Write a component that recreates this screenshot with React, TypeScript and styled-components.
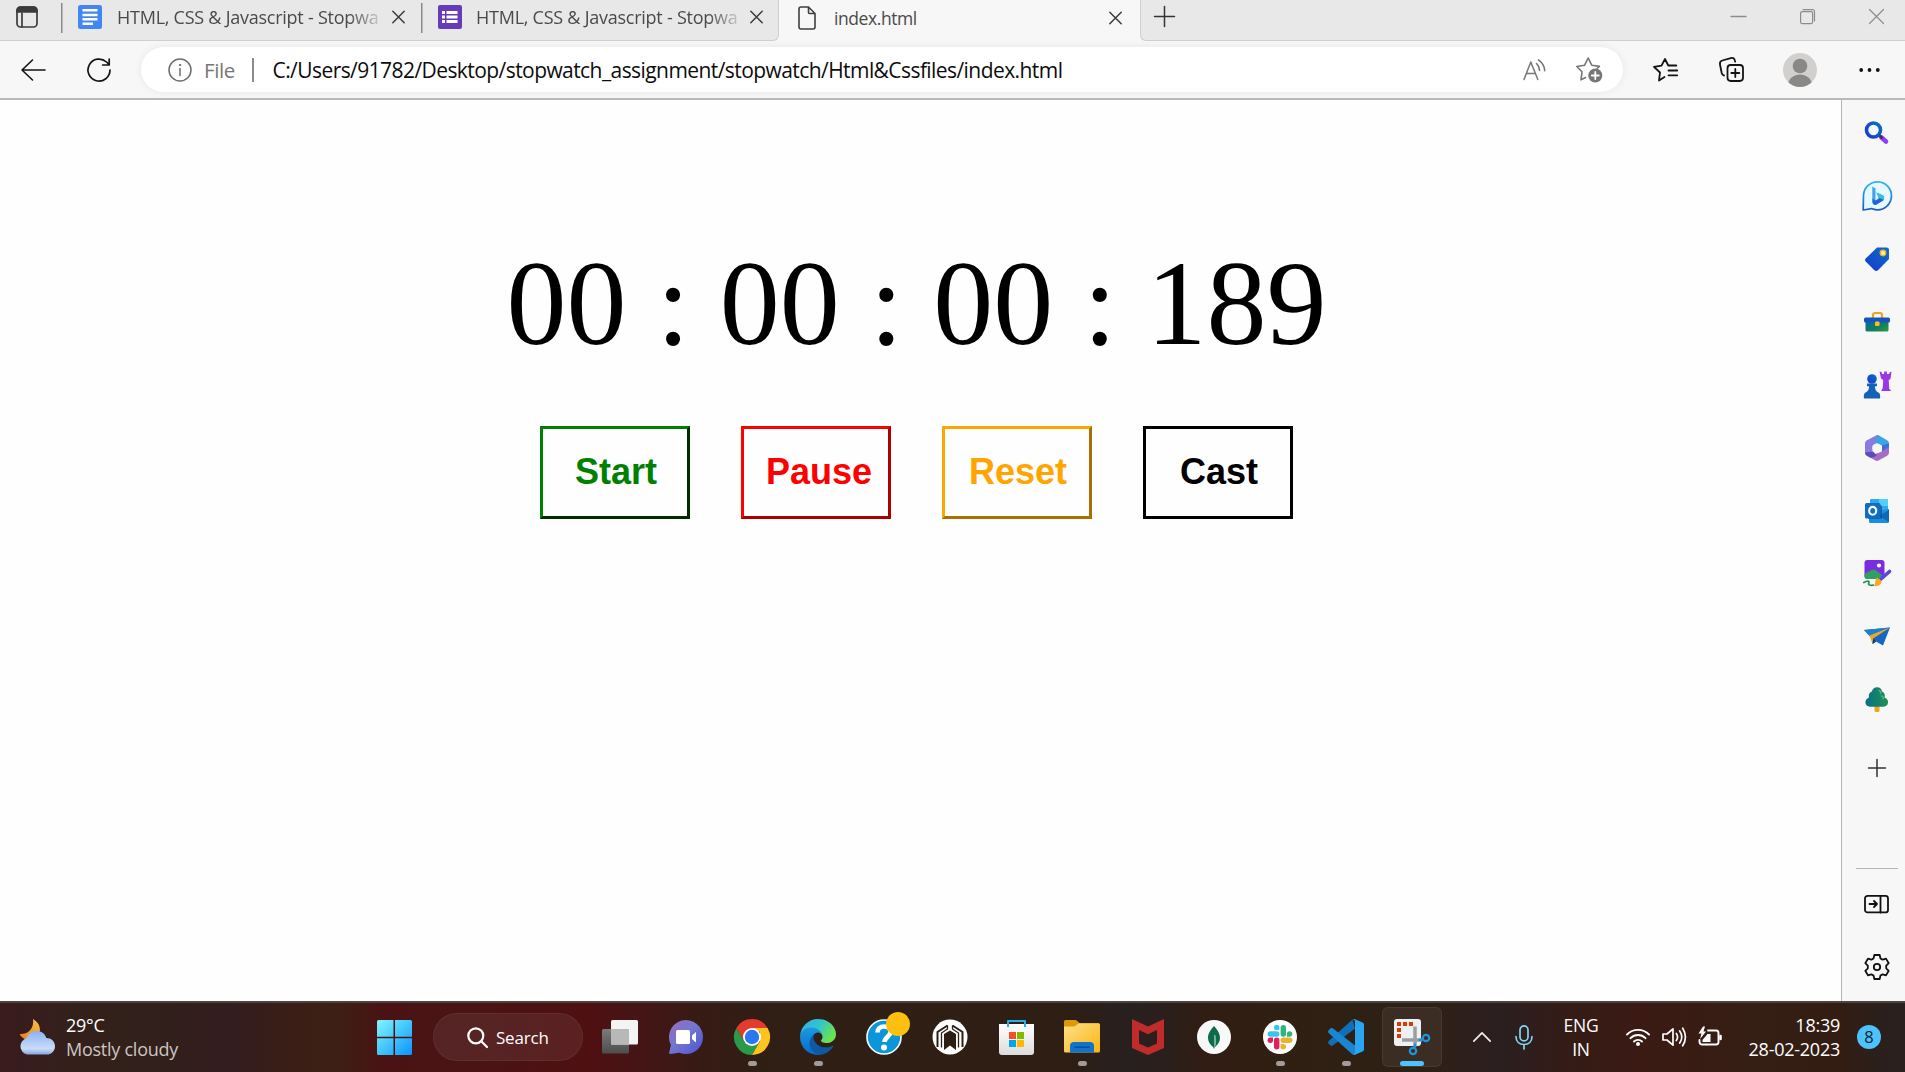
import React from 'react';
import styled, { createGlobalStyle } from 'styled-components';

const GlobalStyle = createGlobalStyle`
  * { box-sizing: border-box; }
  body { margin: 0; overflow: hidden; background: #f7f7f7; }
  svg { display: block; flex: none; overflow: visible; }
`;

const UI_FONT = '"Open Sans", "Noto Sans", sans-serif';

const Screen = styled.div`
  width: 1905px;
  height: 1072px;
  display: flex;
  flex-direction: column;
  overflow: hidden;
  font-family: ${UI_FONT};
`;

/* ---------- tab strip ---------- */

const TabStrip = styled.div`
  height: 41px;
  flex: none;
  display: flex;
  background: #f7f7f7;
`;

const InactiveTabs = styled.div`
  width: 779px;
  display: flex;
  background: #e8e8e8;
  border: solid #cfcfcf;
  border-width: 0 1px 1px 0;
  border-bottom-right-radius: 6px;
`;

const TabMenu = styled.div`
  width: 61px;
  padding: 6px 0 0 16px;
`;

const Tab = styled.div<{ $width: number; $pad: number }>`
  width: ${p => p.$width}px;
  padding: 0 ${p => p.$pad}px 6px 17px;
  display: flex;
  align-items: center;
`;

const DividedTab = styled(Tab)`
  background: linear-gradient(#8a8a8a, #8a8a8a) 0 3px / 1.5px 30px no-repeat;
`;

const ActiveTab = styled(Tab)`
  padding-left: 19px;
  background: #f7f7f7;
`;

const TabTitle = styled.span<{ $fade?: boolean; $gap: number }>`
  flex: 1;
  margin-left: ${p => p.$gap}px;
  white-space: nowrap;
  font-size: ${p => (p.$fade ? 18 : 17.5)}px;
  line-height: 28px;
  letter-spacing: ${p => (p.$fade ? -0.25 : -0.42)}px;
  color: #4a4a4a;
  ${p => p.$fade && 'mask-image: linear-gradient(90deg, #000 232px, rgba(0, 0, 0, 0.2) 262px);'}
`;

const StripRest = styled.div`
  flex: 1;
  display: flex;
  justify-content: space-between;
  background: #e8e8e8;
  border: solid #cfcfcf;
  border-width: 0 0 1px 1px;
  border-bottom-left-radius: 6px;
  padding: 6px 21px 0 13px;
`;

const WindowControls = styled.div`
  display: flex;
  gap: 54px;
  padding-top: 3px;
`;

/* ---------- toolbar ---------- */

const Toolbar = styled.div`
  height: 59px;
  flex: none;
  display: flex;
  align-items: center;
  border-bottom: 2px solid #b9b9b9;
  background: #f7f7f7;
`;

const ToolCell = styled.div<{ $width: number }>`
  width: ${p => p.$width}px;
  flex: none;
  display: flex;
  justify-content: center;
`;

const AddressBar = styled.div`
  width: 1482px;
  height: 45px;
  border-radius: 23px;
  background: #fff;
  box-shadow: 0 0 9px rgba(0, 0, 0, 0.07);
  display: flex;
  align-items: center;
  padding: 0 20px 0 27px;
`;

const Scheme = styled.span`
  width: 48px;
  padding-left: 12px;
  font-size: 20.5px;
  letter-spacing: -0.4px;
  color: #767676;
`;

const AddressDivider = styled.span`
  width: 1.5px;
  height: 24px;
  margin: 0 19px 0 12px;
  background: #8a8a8a;
`;

const Url = styled.span`
  flex: 1;
  font-size: 21px;
  letter-spacing: -0.57px;
  white-space: nowrap;
  color: #0c0c0c;
`;

const AddressActions = styled.div`
  display: flex;
  align-items: center;
  gap: 30px;
`;

/* ---------- page ---------- */

const Middle = styled.div`
  flex: 1;
  min-height: 0;
  display: flex;
`;

const Page = styled.main`
  width: 1842px;
  border-right: 1px solid #b5b5b5;
  background: #fefefe;
  display: flex;
  flex-direction: column;
  align-items: center;
  padding: 144px 8px 0 0;
`;

const Clock = styled.div`
  font: 120px/120px "Liberation Serif", "Times New Roman", serif;
  white-space: pre;
  color: #000;
`;

const ButtonRow = styled.div`
  display: flex;
  gap: 51px;
  margin: 62px 0 0 0;
`;

const ActionButton = styled.button<{ $color: string; $flat?: boolean }>`
  width: 150px;
  height: 93px;
  padding: 0 20px 1px 22px;
  border: 3px ${p => (p.$flat ? 'solid' : 'outset')} ${p => p.$color};
  background: #fefefe;
  color: ${p => p.$color};
  font: bold 36px "Liberation Sans", Arial, sans-serif;
  white-space: nowrap;
`;

const Sidebar = styled.aside`
  flex: 1;
  display: flex;
  flex-direction: column;
  align-items: center;
  background: #f7f7f7;
  padding: 1px 0 0 6px;
`;

const SideCell = styled.div<{ $height?: number }>`
  height: ${p => p.$height ?? 63}px;
  flex: none;
  display: flex;
  align-items: center;
`;

const SideRule = styled.div`
  width: 42px;
  height: 1px;
  margin: 64px 0 3px 0;
  background: #b5b5b5;
`;

/* ---------- taskbar ---------- */

const Taskbar = styled.footer`
  height: 71px;
  flex: none;
  display: flex;
  align-items: center;
  border-top: 2px solid #4b4442;
  padding-bottom: 1px;
  color: #fff;
  background: linear-gradient(90deg,
    #3a1b1e 0, #34201b 70px, #31201b 150px, #331d1e 230px, #3b1e16 300px, #3d1f14 340px,
    #4a1214 385px, #4a1414 460px, #4f1012 590px, #451516 640px, #371b15 700px, #2f1f14 770px,
    #2e1e13 1060px, #282020 1130px, #2a1f1c 1160px, #311d13 1210px, #2f2013 1320px,
    #2f2017 1440px, #2b1f20 1500px, #351c16 1570px, #3b1a14 1640px, #351f14 1760px,
    #331d13 1840px, #2a201e 1890px, #2a201e 100%);
`;

const Weather = styled.div`
  width: 377px;
  display: flex;
  align-items: center;
  gap: 11px;
  padding-left: 19px;
`;

const Lines = styled.div<{ $align?: string; $width?: number; $size?: number }>`
  width: ${p => (p.$width ? p.$width + 'px' : 'auto')};
  font-size: ${p => p.$size ?? 18}px;
  line-height: 24px;
  letter-spacing: -0.25px;
  text-align: ${p => p.$align ?? 'left'};
  white-space: nowrap;
  padding-bottom: 1px;
`;

const Muted = styled.div`
  color: #cdc5c2;
`;

const SearchPill = styled.div`
  width: 150px;
  height: 48px;
  margin: 0 4px 0 21px;
  border-radius: 24px;
  background: rgba(255, 255, 255, 0.07);
  border: 1px solid rgba(255, 255, 255, 0.05);
  display: flex;
  align-items: center;
  gap: 8px;
  padding-left: 33px;
  font-size: 17px;
  letter-spacing: -0.2px;
`;

const AppCell = styled.div`
  position: relative;
  width: 66px;
  height: 68px;
  display: flex;
  align-items: center;
  justify-content: center;
`;

const ActiveTile = styled.div`
  width: 60px;
  height: 60px;
  border-radius: 6px;
  background: rgba(255, 255, 255, 0.06);
  border: 1px solid rgba(255, 255, 255, 0.06);
  display: flex;
  align-items: center;
  justify-content: center;
`;

const Running = styled.span<{ $active?: boolean }>`
  position: absolute;
  bottom: 5px;
  width: ${p => (p.$active ? 24 : 9)}px;
  height: 5px;
  border-radius: 3px;
  background: ${p => (p.$active ? '#4cc2ff' : '#a39b97')};
`;

const AlertDot = styled.span`
  position: absolute;
  left: 35px;
  top: 9px;
  width: 24px;
  height: 24px;
  border-radius: 50%;
  background: #fdc010;
`;

const Tray = styled.div`
  display: flex;
  align-items: center;
  margin-left: 16px;
`;

const TrayCell = styled.div<{ $width: number }>`
  width: ${p => p.$width}px;
  display: flex;
  justify-content: center;
`;

const CountBadge = styled.div`
  width: 24px;
  height: 24px;
  margin-left: 17px;
  border-radius: 50%;
  background: #4cc2ff;
  color: #10202a;
  font-size: 16.5px;
  line-height: 23px;
  text-align: center;
`;

/* ---------- icons ---------- */

type BoxProps = { w: number; h: number; children: React.ReactNode; stroke?: string; sw?: number };

const Ico = ({ w, h, children, stroke = 'none', sw = 1.6 }: BoxProps) => (
  <svg width={w} height={h} viewBox={`0 0 ${w} ${h}`} fill="none" stroke={stroke} strokeWidth={sw} strokeLinecap="round" strokeLinejoin="round">
    {children}
  </svg>
);

const TabActionsIcon = () => (
  <Ico w={22} h={22} stroke="#3b3b3b" sw={1.7}>
    <rect x="1" y="1" width="20" height="20" rx="3.5" />
    <path d="M1 6V4.500a3.500 3.500 0 0 1 3.500-3.500h13a3.500 3.500 0 0 1 3.500 3.500V6z" fill="#3b3b3b" />
    <path d="M6 7v14" />
  </Ico>
);

const DocsIcon = () => (
  <Ico w={24} h={24}>
    <rect width="24" height="24" rx="2.500" fill="#4285f4" />
    <path d="M4.500 4h15v2.500h-15zM4.500 8.800h15v2.500h-15zM4.500 13h15v2.500h-15zM4.500 17.500h10.500v2.500H4.500z" fill="#fff" />
  </Ico>
);

const FormsIcon = () => (
  <Ico w={24} h={24}>
    <rect width="24" height="24" rx="2" fill="#673ab7" />
    <path d="M4 6h3v3H4zM4 10.500h3v3H4zM4 15h3v3H4zM8.500 6h11v3h-11zM8.500 10.500h11v3h-11zM8.500 15h11v3h-11z" fill="#fff" />
  </Ico>
);

const PageIcon = () => (
  <Ico w={18} h={24} stroke="#3f3f3f" sw={1.6}>
    <path d="M3 1h7.500L17 7.500V21a2 2 0 0 1-2 2H3a2 2 0 0 1-2-2V3a2 2 0 0 1 2-2zM10.500 1v5.500a1 1 0 0 0 1 1H17" />
  </Ico>
);

const CloseIcon = () => (
  <Ico w={13} h={12} stroke="#3c3c3c" sw={1.5}>
    <path d="M.8.300l11.400 11.400M12.200.300L.8 11.700" />
  </Ico>
);

const BackIcon = () => (
  <Ico w={25} h={22} stroke="#141414" sw={1.6}>
    <path d="M24 11H1M11.500 1L1 11l10.500 10" />
  </Ico>
);

const ReloadIcon = () => (
  <Ico w={24} h={24} stroke="#141414" sw={1.7}>
    <path d="M23 12A11 11 0 1 1 19.500 4L22 6.300M22.200 1v6h-6.500" />
  </Ico>
);

const InfoIcon = () => (
  <Ico w={24} h={24} stroke="#6e6e6e" sw={1.5}>
    <circle cx="12" cy="12" r="11" />
    <path d="M12 10.500v7" />
    <circle cx="12" cy="7" r=".7" fill="#6e6e6e" strokeWidth="1" />
  </Ico>
);

const ReadAloudIcon = () => (
  <Ico w={23} h={22} stroke="#767676" sw={1.5}>
    <path d="M1 20.500L7.800 3l7 17.500M3.500 14.500H12.200M13.500 4.500q3 3 3 7M15.500.800q6 4.500 6.200 11" />
  </Ico>
);

const StarAddIcon = () => (
  <Ico w={27} h={26} stroke="#767676" sw={1.6}>
    <path d="M9.500 20.500L5 22.800l1-8L.8 9.500l7.700-1.200L12.200 1l3.500 7.200 7.700 1.200-2.300 2.100" />
    <circle cx="19.300" cy="18.500" r="7" fill="#767676" stroke="none" />
    <path d="M19.300 15v7M15.800 18.500h7" stroke="#fff" strokeWidth="1.800" />
  </Ico>
);

const FavoritesIcon = () => (
  <Ico w={25} h={24} stroke="#141414" sw={1.8}>
    <path d="M11.500 19L6 22.500l1-8L1 8.800l7.500-1.200L12 1l3.300 6.500h8M15.500 12.500h8.700M15.500 17.300h8.700" />
  </Ico>
);

const CollectionsIcon = () => (
  <Ico w={25} h={25} stroke="#141414" sw={1.8}>
    <rect x="8.500" y="8" width="15.500" height="16" rx="3.200" />
    <path d="M16.300 12v8M12.300 16h8M5 18.500c-1.300-.300-2-1.200-2.300-2.500L1 7.500C.600 5.300 1.500 4 3.300 3.500l8.500-2.400c2-.5 3.500.3 4 2.300l.4 1.300" />
  </Ico>
);

const AvatarIcon = () => (
  <Ico w={34} h={34}>
    <clipPath id="avatarClip"><circle cx="17" cy="17" r="17" /></clipPath>
    <g clipPath="url(#avatarClip)">
      <rect width="34" height="34" fill="#d2d0ce" />
      <circle cx="17" cy="13" r="7.300" fill="#8a8886" />
      <path d="M4.500 32c1.500-7 6.500-10.500 12.500-10.500S28 25 29.500 32l-5 4h-15z" fill="#8a8886" />
    </g>
  </Ico>
);

const DotsIcon = () => (
  <Ico w={21} h={4}>
    <circle cx="2.200" cy="2" r="1.900" fill="#141414" />
    <circle cx="10.500" cy="2" r="1.900" fill="#141414" />
    <circle cx="18.800" cy="2" r="1.900" fill="#141414" />
  </Ico>
);

const GradientDefs = styled.svg`
  position: absolute;
`;

const Gradients = () => (
  <GradientDefs width="0" height="0">
    <defs>
      <linearGradient id="blueDeep" x1="0" y1="1" x2="1" y2="0"><stop offset="0" stopColor="#1a37d0" /><stop offset="1" stopColor="#0a6fc2" /></linearGradient>
      <linearGradient id="purple" x1="0" y1="0" x2="1" y2="1"><stop offset="0" stopColor="#6a2be8" /><stop offset="1" stopColor="#b84bf5" /></linearGradient>
      <linearGradient id="bing" x1="0" y1="0" x2="0" y2="1"><stop offset="0" stopColor="#2fb6ef" /><stop offset="1" stopColor="#2059cf" /></linearGradient>
      <linearGradient id="boxBody" x1="0" y1="0" x2="1" y2="1"><stop offset="0" stopColor="#0f63b5" /><stop offset=".6" stopColor="#127f58" /><stop offset="1" stopColor="#2a9b4b" /></linearGradient>
      <linearGradient id="tree" x1="0" y1="0" x2="1" y2="0"><stop offset="0" stopColor="#0a6f8a" /><stop offset="1" stopColor="#1f9150" /></linearGradient>
      <linearGradient id="cloud" x1="0" y1="0" x2="0" y2="1"><stop offset="0" stopColor="#88b2f5" /><stop offset=".75" stopColor="#cbdcf7" /><stop offset="1" stopColor="#86a5de" /></linearGradient>
      <linearGradient id="moon" x1="0" y1="1" x2="1" y2="0"><stop offset="0" stopColor="#f07a1c" /><stop offset="1" stopColor="#f9c440" /></linearGradient>
      <linearGradient id="chat" x1="0" y1="0" x2="1" y2="1"><stop offset="0" stopColor="#9a6cb4" /><stop offset=".45" stopColor="#7477d0" /><stop offset="1" stopColor="#4b54cf" /></linearGradient>
      <linearGradient id="edgeTop" x1="0" y1="0" x2="1" y2=".5"><stop offset="0" stopColor="#2fb0e6" /><stop offset=".5" stopColor="#30c3d0" /><stop offset="1" stopColor="#6be34e" /></linearGradient>
      <linearGradient id="edgeLeft" x1="0" y1="0" x2="0" y2="1"><stop offset="0" stopColor="#1b9de2" /><stop offset="1" stopColor="#0b69c9" /></linearGradient>
      <linearGradient id="folder" x1="0" y1="0" x2="1" y2="1"><stop offset="0" stopColor="#ffe08a" /><stop offset="1" stopColor="#f9b50f" /></linearGradient>
      <linearGradient id="store" x1="0" y1="0" x2="0" y2="1"><stop offset="0" stopColor="#fff" /><stop offset="1" stopColor="#dcdcdc" /></linearGradient>
      <linearGradient id="grayPane" x1="0" y1="0" x2="0" y2="1"><stop offset="0" stopColor="#7b7b7b" /><stop offset="1" stopColor="#4d4d4d" /></linearGradient>
      <linearGradient id="winPane" gradientUnits="userSpaceOnUse" x1="0" y1="0" x2="35" y2="35"><stop offset="0" stopColor="#84f5ff" /><stop offset=".5" stopColor="#44c6fb" /><stop offset="1" stopColor="#0a93ff" /></linearGradient>
    </defs>
  </GradientDefs>
);

const SideSearch = () => (
  <Ico w={26} h={26}>
    <path d="M17.500 17.500l4.500 4" stroke="#8f3df0" strokeWidth="4.600" />
    <path d="M15.500 15.500l2 2" stroke="#4a2a55" strokeWidth="3" />
    <circle cx="9.500" cy="10" r="7" stroke="url(#blueDeep)" strokeWidth="3.600" fill="#f4fbff" />
  </Ico>
);

const SideBing = () => (
  <Ico w={30} h={30}>
    <path d="M1.200 29l.3-15A14 14 0 1 1 15 28.800q-3 0-5.500-1.200z" fill="#e6f9ff" stroke="url(#bing)" strokeWidth="1.700" />
    <path d="M10.300 5.500l3.200 1.800v13l-3.200-2.500z" fill="#3fa5ee" />
    <path d="M14.500 11.500l6.500 3c1.500 1 1.500 4 0 5.300L13.800 24c-2 .5-3.500-1.500-3.500-3.500v-3l3.200 2 3.500-2.200z" fill="#1f63d8" />
    <path d="M14.500 11.500l6.500 3c1.200 1 1.400 3 .5 4.500l-5-2.500z" fill="#35c0ea" />
  </Ico>
);

const SideTag = () => (
  <Ico w={26} h={26}>
    <path d="M13 1.500h9.500a2.500 2.500 0 0 1 2.500 2.500v9L14 24.300q-1.800 1.400-3.600 0L1.700 15.600q-1.300-1.500 0-3z" fill="url(#blueDeep)" />
    <circle cx="19" cy="7" r="2.700" fill="#fff3c0" stroke="#f0b31c" strokeWidth="1.500" />
  </Ico>
);

const SideToolbox = () => (
  <Ico w={26} h={20}>
    <path d="M9 5.500V3A2 2 0 0 1 11 1h5a2 2 0 0 1 2 2V5.500" stroke="#eda51b" strokeWidth="2.200" />
    <rect x="1.500" y="7" width="23" height="12.500" rx="1.500" fill="url(#boxBody)" />
    <rect x="0" y="5.500" width="26" height="5" rx="1.500" fill="#1554bd" />
    <rect x="11" y="9.500" width="4.500" height="4.500" rx="1" fill="#fbbc2c" />
  </Ico>
);

const SideChess = () => (
  <Ico w={28} h={28}>
    <path d="M16.500.5l2 .5.5 2h2l.3-2.500h2.500L24 3h2l1-2 1.500-.3-1 7-1.800 1.500.5 8.500 2 2.300h-10l1.500-3 .5-8-2.200-1.500z" fill="#9a35e8" />
    <circle cx="9" cy="8" r="4.800" fill="url(#blueDeep)" />
    <path d="M4 12.500h10v2.800h-2c0 3 .5 5 4 6.500 1 1.300 1.500 3 1 5.700H1c-.5-2.700 0-4.400 1-5.700 3.500-1.500 4-3.500 4-6.500H4z" fill="#1462b8" />
  </Ico>
);

const SideOffice = () => (
  <Ico w={24} h={26}>
    <path d="M12 0L1.500 5.500Q0 6.500 0 8.500v9L7.500 20V10.500L17 5.500 14 .5q-1-.8-2-.5z" fill="#8a7be0" />
    <path d="M13.500.3L9 7.500l8 3v7L24 14V8.500q0-2-1.500-3z" fill="#3aa3e2" />
    <path d="M17 10.500L24 8.500v5L17 17.500z" fill="#3a70d8" />
    <path d="M0 17.500q0 2 1.500 3L10.500 25.500q1.500.8 3 0L22.500 20.500q1.500-1 1.500-3V12L17 16.500 7.500 20z" fill="#a56cc6" />
    <path d="M0 17.500q0 2 1.500 3l4 2.200Q9 22.500 12 20.500l-4-4z" fill="#5c4bb8" />
    <circle cx="12" cy="13" r="4.600" fill="#f7f7f7" />
  </Ico>
);

const SideOutlook = () => (
  <Ico w={24} h={24}>
    <rect x="5" y="0" width="18" height="13" rx="1" fill="#31a8ea" />
    <path d="M14 0h8a1 1 0 0 1 1 1v6h-9z" fill="#50d0fb" />
    <path d="M4 13L24 10v12.500a1.500 1.500 0 0 1-1.500 1.500H5.500A1.500 1.500 0 0 1 4 22.500z" fill="#1990df" />
    <path d="M24 11v12L14 17z" fill="#1067b3" />
    <rect x="3" y="6" width="14" height="14" rx="1.500" fill="#0a3f74" opacity=".6" />
    <rect x="0" y="4" width="15.500" height="15.500" rx="1.500" fill="#0f6dc4" />
    <ellipse cx="7.700" cy="11.800" rx="3.500" ry="3.900" stroke="#fff" strokeWidth="2.100" />
  </Ico>
);

const SideDesigner = () => (
  <Ico w={28} h={27}>
    <rect x="1.500" y="0" width="20" height="19" rx="3" fill="#7b2be0" />
    <path d="M1.500 14l7-4q2-1 4 0L19 15v4H4.500q-3 0-3-3z" fill="#2fa05e" />
    <circle cx="16" cy="5.500" r="2.100" fill="#fff" />
    <path d="M26.500 11.500L18 19" stroke="#5b48d8" strokeWidth="3.600" />
    <path d="M14 17.500l4.500 3.500c0 3.500-3 6-7.500 5 1.800-1.500.5-6.500 3-8.500z" fill="#f7a921" />
    <path d="M.8 22.500c3-2 6-2 5 .3s1.500 2.700 4.500 2.400" stroke="#229457" strokeWidth="1.800" />
  </Ico>
);

const SidePlane = () => (
  <Ico w={26} h={19}>
    <path d="M0 3L26 .5 19 18.500l-7-4L8.500 17l-1-6z" fill="#1567c4" />
    <path d="M0 3L26 .5 7.500 11z" fill="#1b7fd4" />
    <path d="M26 .5L5.500 8.500 8.500 17l.7-5.500z" fill="#f3a71c" />
    <path d="M8.500 17l.7-5.500 3 3z" fill="#093e86" />
  </Ico>
);

const SideTree = () => (
  <Ico w={24} h={25}>
    <rect x="9.500" y="18" width="5" height="7" rx="1.500" fill="#eea51f" />
    <path d="M12 .3c3 0 4.800 1.700 5 4.200 2.500 1 3.500 3.500 2.500 6 3 1 4 3.500 3.500 5.500-.5 2.500-2.500 3.800-5 3.800H5.500C3 19.800.800 18.500.500 16c-.4-2.500 1-4.500 3.500-5.500-.8-2.500.3-5 2.800-6C7.500 2 9.300.3 12 .3z" fill="url(#tree)" />
    <path d="M14 3.500q2.500 1 1.500 3M16.500 9q2.500 1 1.500 3" stroke="#66c48f" strokeWidth="1.500" opacity=".7" />
  </Ico>
);

const PlusIcon = ({ size }: { size: number }) => (
  <Ico w={size} h={size} stroke="#333" sw={1.5}>
    <path d={`M${size / 2} .5V${size - 0.5}M.5 ${size / 2}H${size - 0.5}`} />
  </Ico>
);

const PanelIcon = () => (
  <Ico w={25} h={18} stroke="#111" sw={1.8}>
    <rect x="1" y=".9" width="23" height="16.500" rx="2.500" />
    <path d="M16.500 1v16.500M5.500 9h7.500M10 6l3 3-3 3" />
  </Ico>
);

const GearIcon = () => (
  <Ico w={26} h={26} stroke="#111" sw={1.8}>
    <path d="M10.300 1h5.400l.7 3.400 2.300 1.300 3.300-1.100L24.700 9.200l-2.500 2.400v2.800l2.500 2.400-2.700 4.600-3.300-1.100-2.300 1.300-.7 3.400h-5.400l-.7-3.400-2.300-1.300L4 21.400 1.300 16.800l2.500-2.400v-2.800L1.300 9.200 4 4.600l3.300 1.100 2.300-1.300z" />
    <circle cx="13" cy="13" r="3.200" />
  </Ico>
);

const WeatherIcon = () => (
  <Ico w={36} h={36}>
    <path d="M14 0c6 3.500 8.500 9.500 6 15.500-2.500 5-9 7.500-14.500 4.500C3 18.500 1.500 17 .8 15c9 .5 14.500-6 13.200-15z" fill="url(#moon)" />
    <path d="M8.500 35.500A8.300 8.300 0 0 1 7.500 19.300C9 14.500 13 12 17.500 12c4.800 0 8.500 2.500 9.800 7 5 0 8.700 3.500 8.700 8.200s-3.700 8.300-8.200 8.300z" fill="url(#cloud)" />
  </Ico>
);

const WindowsIcon = () => (
  <Ico w={35} h={35}>
    <path d="M1.500 0h15v16.800H0V1.500A1.500 1.500 0 0 1 1.500 0zM18 0h15.500A1.500 1.500 0 0 1 35 1.500v15.300H18zM0 18.300h16.500V35h-15A1.500 1.500 0 0 1 0 33.500zM18 18.300h17v15.200a1.500 1.500 0 0 1-1.500 1.500H18z" fill="url(#winPane)" />
  </Ico>
);

const SearchIcon = () => (
  <Ico w={21} h={21} stroke="#fff" sw={2.200}>
    <circle cx="8.800" cy="8.800" r="7.500" />
    <path d="M14.300 14.300L20 20" />
  </Ico>
);

const TaskViewIcon = () => (
  <Ico w={36} h={34}>
    <rect x="0" y="9" width="27" height="24.500" rx="1.500" fill="url(#grayPane)" />
    <rect x="9" y="0" width="27" height="24.500" rx="1.500" fill="#f4f4f4" />
    <rect x="9" y="9" width="18" height="15.500" fill="#b8b8b8" />
  </Ico>
);

const ChatIcon = () => (
  <Ico w={34} h={34}>
    <path d="M17 0a17 17 0 1 1-6.500 32.700L1.200 34q-1.400 0-1-1.400l1.700-7.600A17 17 0 0 1 17 0z" fill="url(#chat)" />
    <rect x="7" y="10" width="14" height="14" rx="1.500" fill="#fff" />
    <path d="M23 15.500L27 12v10.500l-4-3.500z" fill="#fff" />
  </Ico>
);

const ChromeIcon = () => (
  <Ico w={36} h={36}>
    <path d="M2.400 9A18 18 0 0 1 33.600 9H18l-7.800 13.500z" fill="#e33b2e" />
    <path d="M2.400 9l7.800 13.500L18 27l7.800-4.500L18 36A18 18 0 0 1 2.400 9z" fill="#2a9a48" />
    <path d="M33.600 9A18 18 0 0 1 18 36l7.800-13.500L26 13l-8-4z" fill="#fcc41f" />
    <circle cx="18" cy="18" r="9" fill="#fff" />
    <circle cx="18" cy="18" r="7.200" fill="#2b78ee" />
  </Ico>
);

const EdgeIcon = () => (
  <svg width="36" height="36" viewBox="0 0 256 256">
    <path fill="#0c59a4" d="M231 190.500c-3.400 1.800-6.900 3.400-10.500 4.700a101.900 101.900 0 0 1-35.900 6.500c-47.300 0-88.500-32.500-88.500-74.300a31.500 31.500 0 0 1 16.400-27.300c-42.800 1.800-53.800 46.400-53.800 72.500 0 74 68.100 81.400 82.800 81.400 7.900 0 19.800-2.300 27-4.600l1.300-.4a128.300 128.300 0 0 0 66.600-52.800 4 4 0 0 0-5.400-5.700Z" />
    <path fill="url(#edgeLeft)" d="M105.700 241.400a79.200 79.200 0 0 1-22.700-21.300 80.700 80.700 0 0 1 29.500-120c3.200-1.500 8.500-4.100 15.600-4a32.400 32.400 0 0 1 25.700 13 31.900 31.900 0 0 1 6.300 18.700c0-.2 24.500-79.600-80-79.600-43.900 0-80 41.700-80 78.200a130.200 130.200 0 0 0 12.100 56 128 128 0 0 0 156.400 67 75.500 75.500 0 0 1-62.800-8Z" />
    <path fill="url(#edgeTop)" d="M152.300 148.900c-.9 1-3.400 2.500-3.400 5.600 0 2.600 1.700 5.200 4.800 7.300 14.300 10 41.400 8.600 41.500 8.600a59.600 59.600 0 0 0 30.300-8.300 61.400 61.400 0 0 0 30.400-52.900c.3-22.400-8-37.300-11.300-43.900C223.500 23.900 177.700 0 128 0A128 128 0 0 0 0 126.200c.5-36.500 36.800-66 80-66 3.500 0 23.500.3 42 10a72.600 72.600 0 0 1 30.900 29.300c6.100 10.600 7.200 24.100 7.200 29.500s-2.700 13.300-7.800 19.900Z" />
  </svg>
);

const HelpIcon = () => (
  <Ico w={36} h={36}>
    <circle cx="18" cy="18" r="17" fill="#0a96d8" stroke="#fff" strokeWidth="1.600" />
    <path d="M11.500 13.500c0-4 3-6 6.500-6s6.500 2 6.500 5.500c0 4.500-6 5-6 10" stroke="#fff" strokeWidth="4.600" strokeLinecap="butt" />
    <circle cx="18" cy="28.500" r="3" fill="#fff" />
  </Ico>
);

const ShieldMarkIcon = () => (
  <Ico w={36} h={36}>
    <circle cx="18" cy="18" r="17.500" fill="#fff" />
    <path d="M5.500 28V13L15.500 6.500M30.500 28V13L20.500 6.500" stroke="#2c1f16" strokeWidth="2" strokeLinejoin="miter" strokeLinecap="butt" />
    <path d="M9.500 28.500V14l6-4V6.500M26.500 28.500V14l-6-4V6.500" stroke="#2c1f16" strokeWidth="1.300" strokeLinejoin="miter" strokeLinecap="butt" />
    <path d="M12 31V15l6-3.500 6 3.500v16l-6-4.500z" fill="#2c1f16" />
  </Ico>
);

const StoreIcon = () => (
  <Ico w={35} h={36}>
    <path d="M0 5h35v28a3 3 0 0 1-3 3H3a3 3 0 0 1-3-3z" fill="url(#store)" />
    <path d="M9 8V2h17v6" stroke="#27b0ee" strokeWidth="2" strokeLinecap="butt" />
    <path d="M10 13h7v7h-7z" fill="#f25022" />
    <path d="M18 13h7v7h-7z" fill="#7fba00" />
    <path d="M10 21h7v7h-7z" fill="#00a4ef" />
    <path d="M18 21h7v7h-7z" fill="#ffb900" />
  </Ico>
);

const FolderIcon = () => (
  <Ico w={36} h={34}>
    <path d="M0 1.500A1.500 1.500 0 0 1 1.500 0h9.500q1.500 0 2.500 1.300L15.500 3H35v8H0z" fill="#dc9a08" />
    <path d="M0 6.500h10.500l4-3H35a1 1 0 0 1 1 1V31a1.500 1.500 0 0 1-1.500 1.500h-33A1.500 1.500 0 0 1 0 31z" fill="url(#folder)" />
    <path d="M6 32.500V26a4 4 0 0 1 4-4h16a4 4 0 0 1 4 4v6.500z" fill="#1273c8" />
    <path d="M11 27.300h14" stroke="#0a4f96" strokeWidth="1.500" />
  </Ico>
);

const McAfeeIcon = () => (
  <Ico w={32} h={36}>
    <path d="M0 0l16 7.500L32 0v29L16 36 0 29zM7 11v13.500l9 4 9-4V11l-9 4.200z" fill="#c02b2c" fillRule="evenodd" />
  </Ico>
);

const MongoIcon = () => (
  <Ico w={34} h={34}>
    <circle cx="17" cy="17" r="17" fill="#f8f8f8" />
    <path d="M17 6c4.500 5 6 8.500 6 12s-2 6.500-5.500 9.500L17 29l-.5-1.500C13 24.500 11 21.500 11 18s1.500-7 6-12z" fill="#0d6b4b" />
    <path d="M17 15v14l.5-1.500c2-1.500 2-8 1-12.500z" fill="#7fae98" />
  </Ico>
);

const SlackIcon = () => (
  <Ico w={34} h={34}>
    <circle cx="17" cy="17" r="17" fill="#fff" />
    <g strokeWidth="5.400">
      <path d="M7.300 14h6.400" stroke="#36c5f0" />
      <path d="M20.300 7.700v6.300" stroke="#2eb67d" />
      <path d="M13.700 20.300v6.400" stroke="#e01e5a" />
      <path d="M20.300 20.300h6.400" stroke="#ecb22e" />
    </g>
    <path d="M16.400 10.100h-2.700a2.700 2.700 0 1 1 2.700-2.700z" fill="#36c5f0" />
    <path d="M23.900 16.700V14a2.700 2.700 0 1 1 2.700 2.700z" fill="#2eb67d" />
    <path d="M10 17.600v2.700a2.700 2.700 0 1 1-2.700-2.700z" fill="#e01e5a" />
    <path d="M17.600 24h2.700a2.700 2.700 0 1 1-2.700 2.700z" fill="#ecb22e" />
  </Ico>
);

const VsCodeIcon = () => (
  <Ico w={36} h={36}>
    <path d="M24.500.5L27 9.500 4.800 26.500q-1.300.8-2.300 0L.5 24.600Q-.5 23.300.6 22z" fill="#0f6fb8" />
    <path d="M2.500 9.300q1-.8 2.300 0L27 26.500v8.500l-2.500.6L.6 14Q-.5 12.800.5 11.400z" fill="#1a86d2" />
    <path d="M26.500 0L35 3.800q1 .6 1 1.700v25q0 1.100-1 1.700L26.500 36q-1.300.2-2.200-.7 2.700.7 2.700-2V2.700q0-2.700-2.700-2Q25.200-.3 26.500 0z" fill="#2aa5f2" />
  </Ico>
);

const SnipIcon = () => (
  <Ico w={36} h={36}>
    <rect x="0" y="0" width="27" height="27" rx="3" fill="#eef0f2" />
    <path d="M3 3h4v4H3zM9 3h4v4H9zM15 3h4v4h-4zM3 9h4v4H3zM3 15h4v4H3z" fill="#d83b01" />
    <path d="M8 21h20M21 7.500v20" stroke="#9a9ea3" strokeWidth="3.500" strokeLinecap="butt" />
    <circle cx="32" cy="19" r="3.200" stroke="#1b95e0" strokeWidth="2.200" />
    <circle cx="19" cy="32" r="3.200" stroke="#1b95e0" strokeWidth="2.200" />
    <path d="M28.500 20.500l-3 .5M20.500 28.500l.5-3" stroke="#1b95e0" strokeWidth="2.400" />
  </Ico>
);

const CaretIcon = () => (
  <Ico w={18} h={10} stroke="#f2eeec" sw={1.700}><path d="M.8 9.200L9 .8l8.200 8.400" /></Ico>
);

const MicIcon = () => (
  <Ico w={18} h={25} stroke="#7fd6f2" sw={1.700}>
    <rect x="5" y=".9" width="8" height="15" rx="4" />
    <path d="M1 11.500c0 5 3.300 8 8 8s8-3 8-8M9 19.500v4.500" />
  </Ico>
);

const WifiIcon = () => (
  <Ico w={24} h={18} stroke="#fff" sw={1.900}>
    <path d="M1 6.500a15.500 15.500 0 0 1 22 0M4.500 10.200a10.500 10.500 0 0 1 15 0M8 13.500a5.800 5.800 0 0 1 8 0" />
    <circle cx="12" cy="16" r="2" fill="#fff" stroke="none" />
  </Ico>
);

const VolumeIcon = () => (
  <Ico w={24} h={20} stroke="#fff" sw={1.700}>
    <path d="M1 7h4l6-5.200v16.400L5 13H1zM14.300 6.500q2.500 3.500 0 7M17.700 4q4.200 6 0 12M20.700 1.200q5.500 8.800 0 17.600" />
  </Ico>
);

const BatteryIcon = () => (
  <Ico w={24} h={20} stroke="#fff" sw={1.900}>
    <path d="M10 3.500h8A2.500 2.500 0 0 1 20.500 6v9a2.500 2.500 0 0 1-2.500 2.500H4A2.500 2.500 0 0 1 1.500 15v-2" />
    <path d="M4.500 15v-2l5-6h3v8z" fill="#fff" stroke="none" />
    <path d="M22.500 9v3" strokeWidth="2.600" />
    <path d="M5-.5L.5 6.500h3L2 12l6-7.500H5.500L7-.5z" fill="#fff" stroke="none" />
  </Ico>
);

/* ---------- data ---------- */

const sideIcons = [SideSearch, SideBing, SideTag, SideToolbox, SideChess, SideOffice, SideOutlook, SideDesigner, SidePlane, SideTree];

const apps: { Icon: () => React.ReactElement; running?: boolean; alert?: boolean }[] = [
  { Icon: TaskViewIcon },
  { Icon: ChatIcon },
  { Icon: ChromeIcon, running: true },
  { Icon: EdgeIcon, running: true },
  { Icon: HelpIcon, alert: true },
  { Icon: ShieldMarkIcon },
  { Icon: StoreIcon },
  { Icon: FolderIcon, running: true },
  { Icon: McAfeeIcon },
  { Icon: MongoIcon },
  { Icon: SlackIcon, running: true },
  { Icon: VsCodeIcon, running: true },
];

export default function App() {
  return (
    <Screen>
      <GlobalStyle />
      <Gradients />
      <TabStrip>
        <InactiveTabs>
          <TabMenu><TabActionsIcon /></TabMenu>
          <DividedTab $width={360} $pad={16}>
            <DocsIcon />
            <TabTitle $fade $gap={15}>HTML, CSS &amp; Javascript - Stopwa</TabTitle>
            <CloseIcon />
          </DividedTab>
          <DividedTab $width={357} $pad={15}>
            <FormsIcon />
            <TabTitle $fade $gap={14}>HTML, CSS &amp; Javascript - Stopwa</TabTitle>
            <CloseIcon />
          </DividedTab>
        </InactiveTabs>
        <ActiveTab $width={361} $pad={18}>
          <PageIcon />
          <TabTitle $gap={18}>index.html</TabTitle>
          <CloseIcon />
        </ActiveTab>
        <StripRest>
          <PlusIcon size={21} />
          <WindowControls>
            <Ico w={15} h={15} stroke="#8c8c8c" sw={1.300}><path d="M0 7.500h15" /></Ico>
            <Ico w={15} h={15} stroke="#8c8c8c" sw={1.200}>
              <rect x=".6" y="2.600" width="12" height="12" rx="1.500" />
              <path d="M3 .6h9.500a2 2 0 0 1 2 2V12" />
            </Ico>
            <Ico w={15} h={15} stroke="#8c8c8c" sw={1.200}><path d="M.5.5l14 14M14.500.5l-14 14" /></Ico>
          </WindowControls>
        </StripRest>
      </TabStrip>

      <Toolbar>
        <ToolCell $width={66}><BackIcon /></ToolCell>
        <ToolCell $width={66}><ReloadIcon /></ToolCell>
        <ToolCell $width={9} />
        <AddressBar>
          <InfoIcon />
          <Scheme>File</Scheme>
          <AddressDivider />
          <Url>C:/Users/91782/Desktop/stopwatch_assignment/stopwatch/Html&amp;Cssfiles/index.html</Url>
          <AddressActions><ReadAloudIcon /><StarAddIcon /></AddressActions>
        </AddressBar>
        <ToolCell $width={9} />
        <ToolCell $width={66}><FavoritesIcon /></ToolCell>
        <ToolCell $width={66}><CollectionsIcon /></ToolCell>
        <ToolCell $width={72}><AvatarIcon /></ToolCell>
        <ToolCell $width={66}><DotsIcon /></ToolCell>
      </Toolbar>

      <Middle>
        <Page>
          <Clock>00 : 00 : 00 : 189</Clock>
          <ButtonRow>
            <ActionButton $color="green">Start</ActionButton>
            <ActionButton $color="red">Pause</ActionButton>
            <ActionButton $color="orange">Reset</ActionButton>
            <ActionButton $color="black" $flat>Cast</ActionButton>
          </ButtonRow>
        </Page>
        <Sidebar>
          {sideIcons.map((Icon, i) => <SideCell key={i}><Icon /></SideCell>)}
          <SideCell $height={73}><PlusIcon size={18} /></SideCell>
          <SideRule />
          <SideCell><PanelIcon /></SideCell>
          <SideCell><GearIcon /></SideCell>
        </Sidebar>
      </Middle>

      <Taskbar>
        <Weather>
          <WeatherIcon />
          <Lines><div>29°C</div><Muted>Mostly cloudy</Muted></Lines>
        </Weather>
        <WindowsIcon />
        <SearchPill><SearchIcon />Search</SearchPill>
        {apps.map(({ Icon, running, alert }, i) => (
          <AppCell key={i}>
            <Icon />
            {alert && <AlertDot />}
            {running && <Running />}
          </AppCell>
        ))}
        <AppCell>
          <ActiveTile><SnipIcon /></ActiveTile>
          <Running $active />
        </AppCell>
        <Tray>
          <TrayCell $width={42}><CaretIcon /></TrayCell>
          <TrayCell $width={42}><MicIcon /></TrayCell>
          <Lines $align="center" $width={72} $size={17.5}><div>ENG</div><div>IN</div></Lines>
          <TrayCell $width={42}><WifiIcon /></TrayCell>
          <TrayCell $width={30}><VolumeIcon /></TrayCell>
          <TrayCell $width={42}><BatteryIcon /></TrayCell>
          <Lines $align="right" $width={109}><div>18:39</div><div>28-02-2023</div></Lines>
          <CountBadge>8</CountBadge>
        </Tray>
      </Taskbar>
    </Screen>
  );
}
